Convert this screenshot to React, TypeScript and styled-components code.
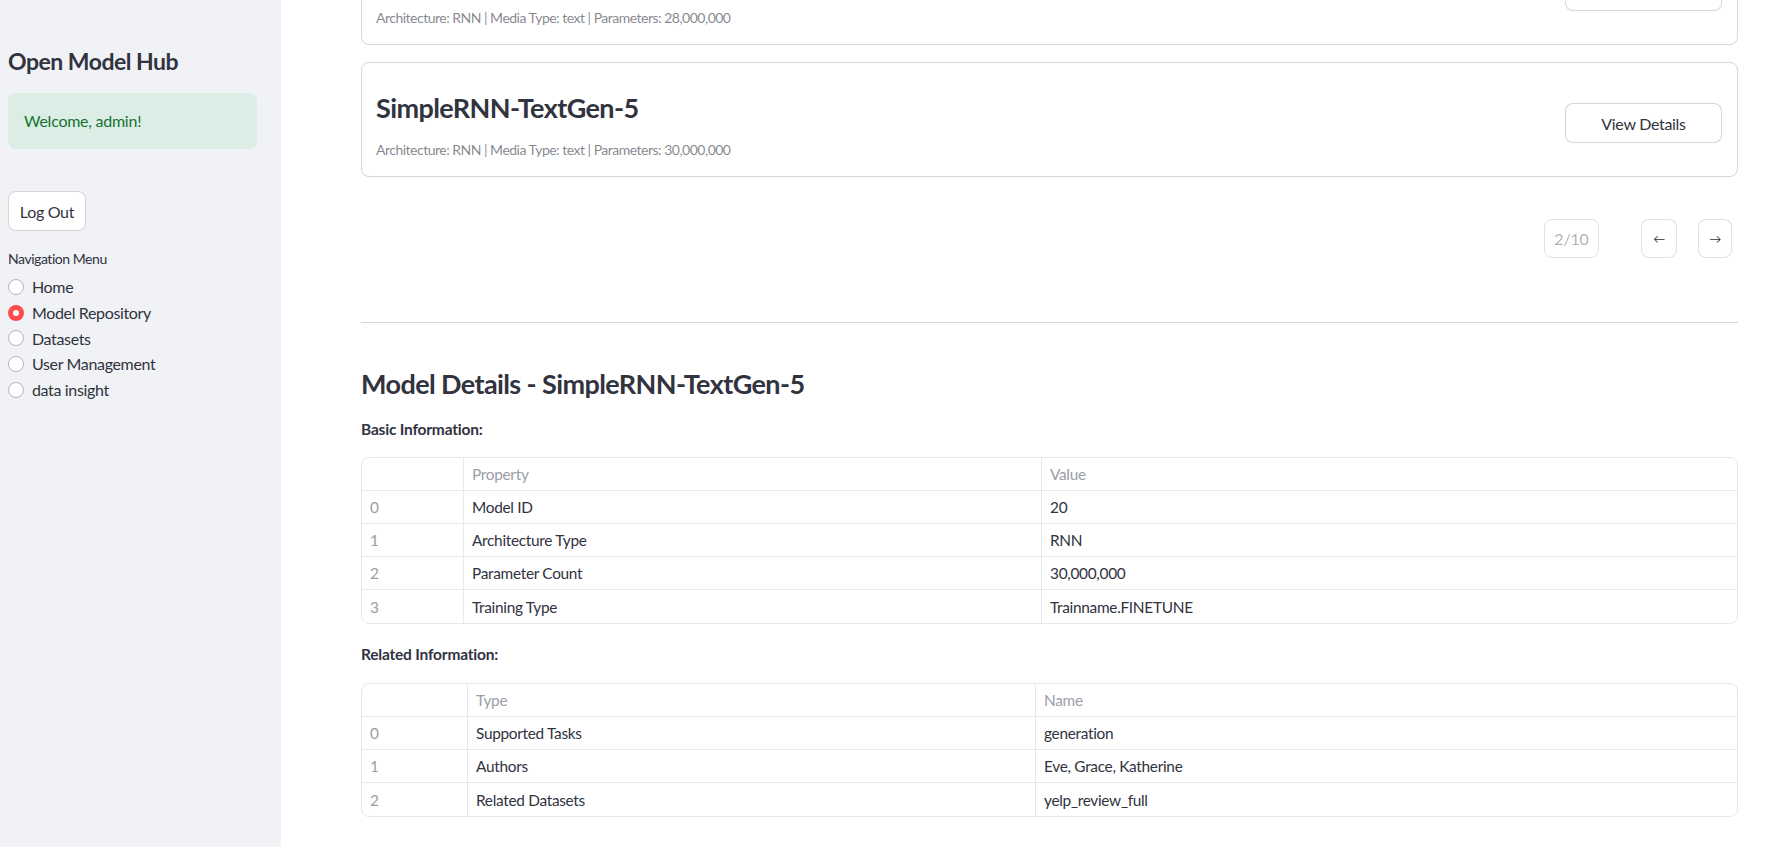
import React from "react";
import styled, { createGlobalStyle } from "styled-components";

const GlobalStyle = createGlobalStyle`
  html, body { margin: 0; padding: 0; height: 100%; overflow: hidden; }
  body { font-family: Lato, "Source Sans Pro", "Noto Sans", sans-serif; color: #31333f; background: #ffffff; }
  * { box-sizing: border-box; }
`;

const Shell = styled.div`
  display: flex;
  width: 1777px;
  height: 847px;
  overflow: hidden;
`;

const Sidebar = styled.aside`
  width: 281px;
  flex: 0 0 281px;
  background: #f0f2f6;
  padding: 47px 24px 0 8px;
  display: flex;
  flex-direction: column;
`;

const SideTitle = styled.h2`
  margin: 0;
  font-size: 23px;
  line-height: 29px;
  font-weight: 700;
  color: #31333f;
  letter-spacing: -0.5px;
`;

const Success = styled.div`
  margin-top: 17px;
  height: 56px;
  border-radius: 8px;
  background: #dbede5;
  color: #177233;
  font-size: 16px;
  line-height: 24px;
  letter-spacing: -0.25px;
  padding: 16px;
`;

const SecondaryButton = styled.button<{ $w?: number; $h?: number }>`
  width: ${(p) => (p.$w ? `${p.$w}px` : "auto")};
  height: ${(p) => (p.$h ? `${p.$h}px` : "40px")};
  border: 1px solid rgba(49, 51, 63, 0.2);
  border-radius: 8px;
  background: #ffffff;
  color: #31333f;
  font-family: inherit;
  font-size: 16px;
  letter-spacing: -0.3px;
  white-space: nowrap;
  padding: 0;
  display: inline-flex;
  align-items: center;
  justify-content: center;
  cursor: pointer;
`;

const LogOutWrap = styled.div`
  margin-top: 42px;
`;

const NavLabel = styled.div`
  margin-top: 18px;
  font-size: 14px;
  line-height: 20px;
  letter-spacing: -0.45px;
  color: #31333f;
`;

const RadioList = styled.div`
  margin-top: 5px;
  display: flex;
  flex-direction: column;
`;

const RadioItem = styled.label`
  display: flex;
  align-items: center;
  height: 25.7px;
  font-size: 16px;
  letter-spacing: -0.35px;
  gap: 8px;
  color: #31333f;
`;

const RadioDot = styled.span<{ $on?: boolean }>`
  width: 16px;
  height: 16px;
  border-radius: 50%;
  flex: 0 0 16px;
  background: ${(p) => (p.$on ? "#ff4b4b" : "#ffffff")};
  border: ${(p) => (p.$on ? "none" : "1px solid #b3b5bc")};
  display: flex;
  align-items: center;
  justify-content: center;
  &::after {
    content: "";
    display: ${(p) => (p.$on ? "block" : "none")};
    width: 6px;
    height: 6px;
    border-radius: 50%;
    background: #ffffff;
  }
`;

const Main = styled.main`
  flex: 1;
  padding: 0 39px 0 80px;
  overflow: hidden;
`;

const Scroller = styled.div`
  margin-top: -70px;
  display: flex;
  flex-direction: column;
`;

const Card = styled.section`
  height: 115px;
  border: 1px solid rgba(49, 51, 63, 0.2);
  border-radius: 8px;
  padding: 16px 15px 14px 14px;
  display: flex;
  justify-content: space-between;
  align-items: flex-start;
  & + & { margin-top: 17px; }
`;

const CardText = styled.div`
  display: flex;
  flex-direction: column;
`;

const CardTitle = styled.h3`
  margin: 12px 0 0;
  font-size: 27px;
  line-height: 34px;
  font-weight: 700;
  letter-spacing: -0.6px;
  color: #31333f;
`;

const CardMeta = styled.div`
  margin-top: 14px;
  font-size: 14px;
  line-height: 22px;
  color: rgba(49, 51, 63, 0.6);
  letter-spacing: -0.5px;
`;

const CardAction = styled.div`
  margin-top: 24px;
`;

const Pager = styled.div`
  margin-top: 42px;
  height: 39px;
  display: flex;
  justify-content: flex-end;
  padding-right: 6px;
`;

const PageBox = styled.div`
  width: 55px;
  height: 39px;
  border: 1px solid rgba(49, 51, 63, 0.15);
  border-radius: 8px;
  color: rgba(49, 51, 63, 0.4);
  font-size: 16px;
  letter-spacing: -0.2px;
  display: flex;
  align-items: center;
  justify-content: center;
  margin-right: 42px;
`;

const ArrowButton = styled(SecondaryButton)<{ $gap?: number }>`
  font-size: 12px;
  margin-left: ${(p) => (p.$gap ? `${p.$gap}px` : "0")};
  border-color: rgba(49, 51, 63, 0.15);
`;

const Divider = styled.hr`
  margin: 64px 0 0;
  border: none;
  border-top: 1px solid rgba(49, 51, 63, 0.2);
  height: 0;
`;

const SectionTitle = styled.h2`
  margin: 44px 0 0;
  font-size: 27px;
  line-height: 34px;
  font-weight: 700;
  letter-spacing: -0.6px;
  color: #31333f;
`;

const SubLabel = styled.div<{ $top: number }>`
  margin-top: ${(p) => p.$top}px;
  font-size: 15.5px;
  line-height: 21px;
  font-weight: 700;
  letter-spacing: -0.2px;
  color: #31333f;
`;

const Table = styled.div<{ $cols: string; $top: number }>`
  margin-top: ${(p) => p.$top}px;
  display: grid;
  grid-template-columns: ${(p) => p.$cols};
  border: 1px solid #e6e7eb;
  border-radius: 8px;
  overflow: hidden;
`;

const Cell = styled.div<{ $head?: boolean; $index?: boolean; $last?: boolean; $bottom?: boolean }>`
  height: 33px;
  display: flex;
  align-items: center;
  padding: 0 8px;
  font-size: 15.4px;
  letter-spacing: -0.3px;
  color: ${(p) => (p.$head || p.$index ? "#9b9ea7" : "#31333f")};
  border-right: ${(p) => (p.$last ? "none" : "1px solid #e8e9ed")};
  border-bottom: ${(p) => (p.$bottom ? "none" : "1px solid #e8e9ed")};
  white-space: nowrap;
`;

type Row = [string, string];

const DataTable: React.FC<{ cols: string; top: number; head: Row; rows: Row[] }> = ({ cols, top, head, rows }) => (
  <Table $cols={cols} $top={top}>
    <Cell $head />
    <Cell $head>{head[0]}</Cell>
    <Cell $head $last>{head[1]}</Cell>
    {rows.map((r, i) => {
      const bottom = i === rows.length - 1;
      return (
        <React.Fragment key={i}>
          <Cell $index $bottom={bottom}>{i}</Cell>
          <Cell $bottom={bottom}>{r[0]}</Cell>
          <Cell $last $bottom={bottom}>{r[1]}</Cell>
        </React.Fragment>
      );
    })}
  </Table>
);

const ModelCard: React.FC<{ name: string; params: string }> = ({ name, params }) => (
  <Card>
    <CardText>
      <CardTitle>{name}</CardTitle>
      <CardMeta>Architecture: RNN | Media Type: text | Parameters: {params}</CardMeta>
    </CardText>
    <CardAction>
      <SecondaryButton $w={157}>View Details</SecondaryButton>
    </CardAction>
  </Card>
);

const navItems = ["Home", "Model Repository", "Datasets", "User Management", "data insight"];

export default function App() {
  return (
    <>
      <GlobalStyle />
      <Shell>
        <Sidebar>
          <SideTitle>Open Model Hub</SideTitle>
          <Success>Welcome, admin!</Success>
          <LogOutWrap>
            <SecondaryButton $w={78}>Log Out</SecondaryButton>
          </LogOutWrap>
          <NavLabel>Navigation Menu</NavLabel>
          <RadioList>
            {navItems.map((n) => (
              <RadioItem key={n}>
                <RadioDot $on={n === "Model Repository"} />
                {n}
              </RadioItem>
            ))}
          </RadioList>
        </Sidebar>
        <Main>
          <Scroller>
            <ModelCard name="SimpleRNN-TextGen-4" params="28,000,000" />
            <ModelCard name="SimpleRNN-TextGen-5" params="30,000,000" />
            <Pager>
              <PageBox>2/10</PageBox>
              <ArrowButton $w={36} $h={39}>←</ArrowButton>
              <ArrowButton $w={34} $h={39} $gap={21}>→</ArrowButton>
            </Pager>
            <Divider />
            <SectionTitle>Model Details - SimpleRNN-TextGen-5</SectionTitle>
            <SubLabel $top={18}>Basic Information:</SubLabel>
            <DataTable
              cols="102px 578px 1fr"
              top={17}
              head={["Property", "Value"]}
              rows={[
                ["Model ID", "20"],
                ["Architecture Type", "RNN"],
                ["Parameter Count", "30,000,000"],
                ["Training Type", "Trainname.FINETUNE"],
              ]}
            />
            <SubLabel $top={20}>Related Information:</SubLabel>
            <DataTable
              cols="106px 568px 1fr"
              top={18}
              head={["Type", "Name"]}
              rows={[
                ["Supported Tasks", "generation"],
                ["Authors", "Eve, Grace, Katherine"],
                ["Related Datasets", "yelp_review_full"],
              ]}
            />
          </Scroller>
        </Main>
      </Shell>
    </>
  );
}
